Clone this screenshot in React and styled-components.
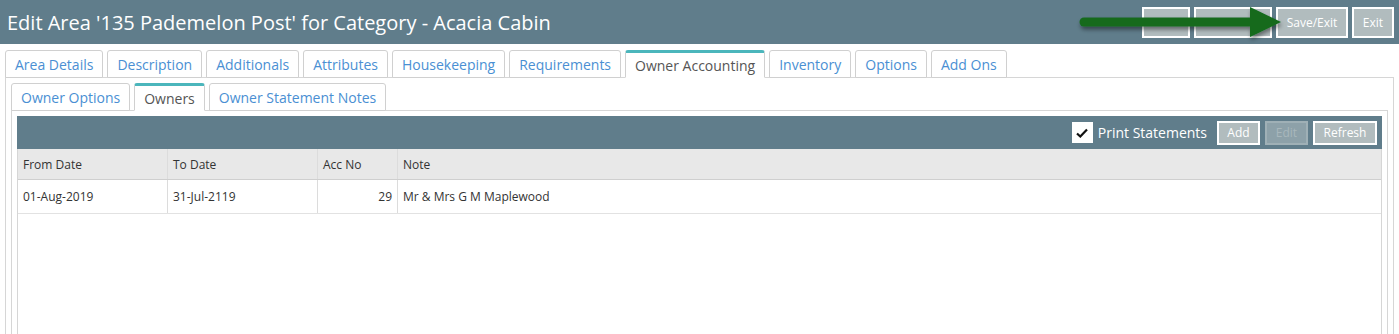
import React from "react";
import styled, { createGlobalStyle } from "styled-components";

const GlobalStyle = createGlobalStyle`
  html, body {
    margin: 0;
    padding: 0;
    background: #fff;
    font-family: "Open Sans", "Liberation Sans", sans-serif;
  }
  * { box-sizing: border-box; }
`;

const Header = styled.div`
  position: relative;
  display: flex;
  align-items: center;
  justify-content: space-between;
  height: 44px;
  padding: 0 5px 0 7px;
  background-color: #607d8b;
`;

const Title = styled.h1`
  margin: 0;
  font-size: 20px;
  font-weight: 400;
  color: #fff;
`;

const Actions = styled.div`
  display: flex;
  gap: 4px;
  align-items: center;
`;

const ActionButton = styled.button`
  width: ${(p) => p.$w}px;
  height: 31px;
  padding: 0;
  border: 2px solid #fff;
  background-color: #b1bcbe;
  color: #fff;
  font-family: inherit;
  font-size: 12px;
  cursor: pointer;
`;

const Arrow = styled.svg`
  position: absolute;
  left: 1074px;
  top: 4px;
  overflow: visible;
  pointer-events: none;
`;

const Body = styled.div`
  padding: 6px 5px 0 5px;
`;

const TabBar = styled.div`
  display: flex;
  gap: 4px;
  border-bottom: 1px solid #d6d6d6;
`;

const Tab = styled.div`
  height: 28px;
  margin-bottom: -1px;
  padding: 0 9px;
  display: flex;
  align-items: center;
  font-size: 14px;
  color: ${(p) => (p.$active ? "#555" : "#4a8fd3")};
  background: #fff;
  border: 1px solid #d0d0d0;
  border-bottom-color: ${(p) => (p.$active ? "#fff" : "#d0d0d0")};
  border-top: ${(p) => (p.$active ? "3px solid #4bb6bc" : "1px solid #d0d0d0")};
  border-radius: 3px 3px 0 0;
  white-space: nowrap;
`;

const Panel = styled.div`
  border-left: 1px solid #d6d6d6;
  border-right: 1px solid #d6d6d6;
  padding: 5px 5px 0 5px;
  height: ${(p) => p.$h}px;
`;

const InnerPanel = styled.div`
  border-left: 1px solid #d6d6d6;
  border-right: 1px solid #d6d6d6;
  padding: 5px 5px 0 5px;
  height: ${(p) => p.$h}px;
`;

const Grid = styled.div`
  border-left: 1px solid #d6d6d6;
  border-right: 1px solid #d6d6d6;
  height: 100%;
`;

const Toolbar = styled.div`
  display: flex;
  align-items: center;
  justify-content: flex-end;
  height: 33px;
  margin: 0 -1px;
  padding: 0 5px;
  background-color: #607d8b;
`;

const CheckLabel = styled.label`
  display: flex;
  align-items: center;
  gap: 5px;
  margin-right: 5px;
  color: #fff;
  font-size: 14px;
`;

const CheckBox = styled.span`
  width: 21px;
  height: 21px;
  background: #fff;
  display: flex;
  align-items: center;
  justify-content: center;
`;

const ToolButton = styled.button`
  width: ${(p) => p.$w}px;
  height: 24px;
  margin-left: 5px;
  padding: 0;
  border: 2px solid ${(p) => (p.disabled ? "#9fb0b6" : "#fff")};
  background-color: ${(p) => (p.disabled ? "#8da1a9" : "#b1bcbe")};
  color: ${(p) => (p.disabled ? "#a8b7bc" : "#fff")};
  font-family: inherit;
  font-size: 12px;
`;

const Row = styled.div`
  display: grid;
  grid-template-columns: 150px 150px 80px 1fr;
  height: ${(p) => (p.$head ? 31 : 34)}px;
  background: ${(p) => (p.$head ? "#e8e8e8" : "#fff")};
  border-bottom: 1px solid ${(p) => (p.$head ? "#cfcfcf" : "#e2e2e2")};
`;

const Cell = styled.div`
  display: flex;
  align-items: center;
  justify-content: ${(p) => (p.$right ? "flex-end" : "flex-start")};
  padding: 0 5px;
  font-size: 12px;
  color: #333;
  border-right: 1px solid ${(p) => (p.$last ? "transparent" : "#dcdcdc")};
`;

const topTabs = [
  "Area Details",
  "Description",
  "Additionals",
  "Attributes",
  "Housekeeping",
  "Requirements",
  "Owner Accounting",
  "Inventory",
  "Options",
  "Add Ons",
];

const subTabs = ["Owner Options", "Owners", "Owner Statement Notes"];

const columns = ["From Date", "To Date", "Acc No", "Note"];

const rows = [
  { from: "01-Aug-2019", to: "31-Jul-2119", acc: "29", note: "Mr & Mrs G M Maplewood" },
];

export default function App() {
  return (
    <>
      <GlobalStyle />
      <Header>
        <Title>Edit Area '135 Pademelon Post' for Category - Acacia Cabin</Title>
        <Actions>
          <ActionButton $w={48} />
          <ActionButton $w={78} />
          <ActionButton $w={72}>Save/Exit</ActionButton>
          <ActionButton $w={42}>Exit</ActionButton>
        </Actions>
        <Arrow width="210" height="40" viewBox="0 0 210 40">
          <defs>
            <filter id="sh" x="-10%" y="-50%" width="120%" height="200%">
              <feDropShadow dx="1" dy="3" stdDeviation="2" floodColor="#000" floodOpacity="0.45" />
            </filter>
          </defs>
          <g filter="url(#sh)">
            <line x1="10" y1="18" x2="182" y2="18" stroke="#136b1f" strokeWidth="9" strokeLinecap="round" />
            <polygon points="176,3 207,18 176,33" fill="#136b1f" />
          </g>
        </Arrow>
      </Header>
      <Body>
        <TabBar>
          {topTabs.map((t) => (
            <Tab key={t} $active={t === "Owner Accounting"}>
              {t}
            </Tab>
          ))}
        </TabBar>
        <Panel $h={257}>
          <TabBar>
            {subTabs.map((t) => (
              <Tab key={t} $active={t === "Owners"}>
                {t}
              </Tab>
            ))}
          </TabBar>
          <InnerPanel $h={230}>
            <Grid>
              <Toolbar>
                <CheckLabel>
                  <CheckBox>
                    <svg width="12" height="10" viewBox="0 0 12 10">
                      <path d="M1 5.5 L4.3 8.5 L11 1.5" fill="none" stroke="#111" strokeWidth="2.2" />
                    </svg>
                  </CheckBox>
                  Print Statements
                </CheckLabel>
                <ToolButton $w={43}>Add</ToolButton>
                <ToolButton $w={43} disabled>
                  Edit
                </ToolButton>
                <ToolButton $w={64}>Refresh</ToolButton>
              </Toolbar>
              <Row $head>
                {columns.map((c, i) => (
                  <Cell key={c} $last={i === columns.length - 1}>
                    {c}
                  </Cell>
                ))}
              </Row>
              {rows.map((r) => (
                <Row key={r.from}>
                  <Cell>{r.from}</Cell>
                  <Cell>{r.to}</Cell>
                  <Cell $right>{r.acc}</Cell>
                  <Cell $last>{r.note}</Cell>
                </Row>
              ))}
            </Grid>
          </InnerPanel>
        </Panel>
      </Body>
    </>
  );
}
